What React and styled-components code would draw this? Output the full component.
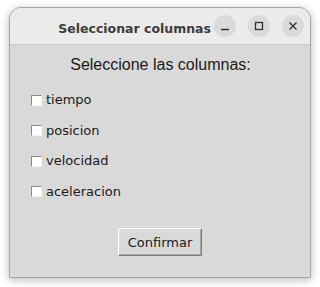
import React from "react";
import styled, { createGlobalStyle } from "styled-components";

const Global = createGlobalStyle`
  html, body { margin: 0; padding: 0; background: #ffffff; }
  body { width: 320px; height: 287px; overflow: hidden; }
  * { box-sizing: border-box; }
`;

const Window = styled.div`
  margin: 7px 0 0 9px;
  width: 302px;
  height: 271px;
  display: flex;
  flex-direction: column;
  border: 1px solid #a4a4a4;
  border-radius: 12px 12px 0 0;
  overflow: hidden;
  background: #d9d9d9;
  box-shadow: 0 2px 9px rgba(0, 0, 0, 0.28);
`;

const TitleBar = styled.div`
  height: 37px;
  flex: none;
  display: flex;
  align-items: center;
  justify-content: flex-end;
  padding-right: 6px;
  background: #ebebeb;
  border-bottom: 1px solid #c9c9c9;
`;

const Title = styled.div`
  font-family: "DejaVu Sans", sans-serif;
  font-weight: bold;
  font-size: 12.5px;
  line-height: 15px;
  color: #3c3c3c;
  margin: 4px 3px 0 0;
  white-space: nowrap;
`;

const Controls = styled.div`
  display: flex;
  gap: 12px;
`;

const CircleButton = styled.div`
  width: 22px;
  height: 22px;
  border-radius: 50%;
  background: #dadada;
  display: flex;
  align-items: center;
  justify-content: center;
  svg { display: block; }
`;

const Body = styled.div`
  flex: 1;
  display: flex;
  flex-direction: column;
  padding: 11px 20px 0 21px;
`;

const Heading = styled.div`
  font-family: "Liberation Sans", Arial, sans-serif;
  font-size: 16px;
  line-height: 18px;
  color: #1a1a1a;
  text-align: center;
`;

const List = styled.div`
  display: flex;
  flex-direction: column;
  gap: 15.67px;
  margin-top: 18px;
`;

const Row = styled.label`
  display: flex;
  align-items: center;
  gap: 4px;
  height: 15px;
  font-family: "DejaVu Sans", sans-serif;
  font-size: 13px;
  line-height: 15px;
  color: #1a1a1a;
`;

const Box = styled.span`
  width: 11px;
  height: 11px;
  margin-top: 1px;
  background: #ffffff;
  border-top: 1px solid #8a8a8a;
  border-left: 1px solid #8a8a8a;
  border-right: 1px solid #f2f2f2;
  border-bottom: 1px solid #f2f2f2;
`;

const Footer = styled.div`
  display: flex;
  justify-content: center;
  margin-top: 29px;
  padding-right: 1px;
`;

const Button = styled.button`
  width: 84px;
  height: 28px;
  padding: 5px 0 4px;
  margin: 0;
  background: #d9d9d9;
  border: 1px solid;
  border-color: #ffffff #7d7d7d #7d7d7d #ffffff;
  box-shadow: inset -1px -1px 0 #a8a8a8;
  font-family: "DejaVu Sans", sans-serif;
  font-size: 13px;
  line-height: 15px;
  color: #1a1a1a;
  text-align: center;
`;

const Glyph = ({ children }) => (
  <svg width="22" height="22" viewBox="0 0 22 22" fill="none" stroke="#2e2e2e" strokeWidth="1.3">
    {children}
  </svg>
);

const columns = ["tiempo", "posicion", "velocidad", "aceleracion"];

export default function App() {
  return (
    <>
      <Global />
      <Window>
        <TitleBar>
          <Title>Seleccionar columnas</Title>
          <Controls>
            <CircleButton>
              <Glyph>
                <line x1="7" y1="14.5" x2="15" y2="14.5" />
              </Glyph>
            </CircleButton>
            <CircleButton>
              <Glyph>
                <rect x="7.5" y="7.5" width="7" height="7" />
              </Glyph>
            </CircleButton>
            <CircleButton>
              <Glyph>
                <line x1="7.5" y1="7.5" x2="14.5" y2="14.5" />
                <line x1="14.5" y1="7.5" x2="7.5" y2="14.5" />
              </Glyph>
            </CircleButton>
          </Controls>
        </TitleBar>
        <Body>
          <Heading>Seleccione las columnas:</Heading>
          <List>
            {columns.map((c) => (
              <Row key={c}>
                <Box />
                {c}
              </Row>
            ))}
          </List>
          <Footer>
            <Button>Confirmar</Button>
          </Footer>
        </Body>
      </Window>
    </>
  );
}
